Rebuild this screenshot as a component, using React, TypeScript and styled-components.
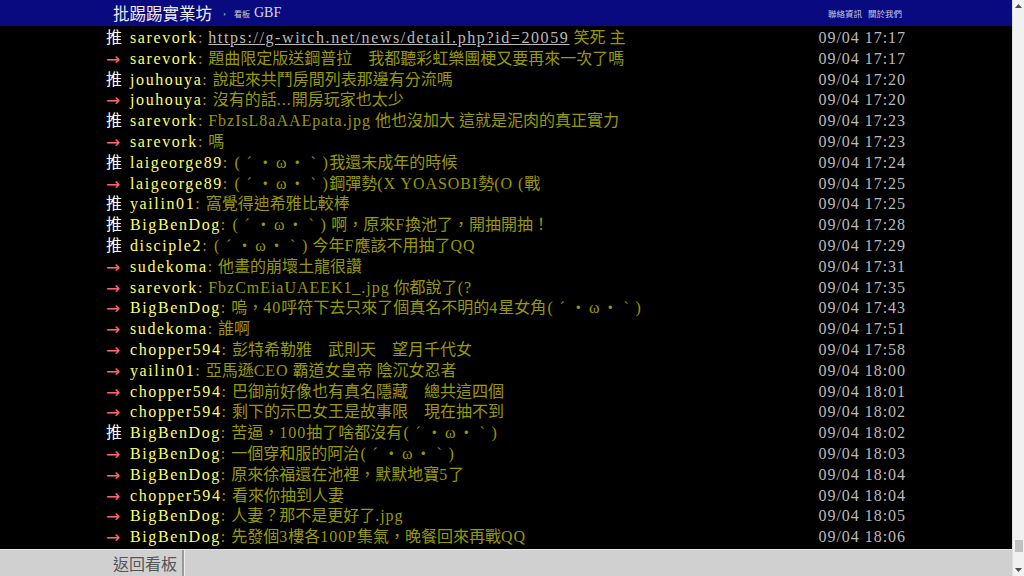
import React from 'react'
import styled, { createGlobalStyle } from 'styled-components'

const Global = createGlobalStyle`
html, body {
  margin: 0;
  padding: 0;
  height: 100%;
  overflow: hidden;
  background: #000;
}
body {
  font-family: "Liberation Serif", "Noto Sans CJK TC", serif;
}
`

type Push = { tag: '推' | '→'; user: string; content: string; link?: string; time: string }

const K = '(ˊ・ω・ˋ)'

const pushes: Push[] = [
  { tag: '推', user: 'sarevork', link: 'https://g-witch.net/news/detail.php?id=20059', content: ' 笑死 主', time: '09/04 17:17' },
  { tag: '→', user: 'sarevork', content: '題曲限定版送鋼普拉　我都聽彩虹樂團梗又要再來一次了嗎', time: '09/04 17:17' },
  { tag: '推', user: 'jouhouya', content: '說起來共鬥房間列表那邊有分流嗎', time: '09/04 17:20' },
  { tag: '→', user: 'jouhouya', content: '沒有的話...開房玩家也太少', time: '09/04 17:20' },
  { tag: '推', user: 'sarevork', content: 'FbzIsL8aAAEpata.jpg 他也沒加大 這就是泥肉的真正實力', time: '09/04 17:23' },
  { tag: '→', user: 'sarevork', content: '嗎', time: '09/04 17:23' },
  { tag: '推', user: 'laigeorge89', content: K + '我還未成年的時候', time: '09/04 17:24' },
  { tag: '→', user: 'laigeorge89', content: K + '鋼彈勢(X YOASOBI勢(O (戰', time: '09/04 17:25' },
  { tag: '推', user: 'yailin01', content: '窩覺得迪希雅比較棒', time: '09/04 17:25' },
  { tag: '推', user: 'BigBenDog', content: K + ' 啊，原來F換池了，開抽開抽！', time: '09/04 17:28' },
  { tag: '推', user: 'disciple2', content: K + ' 今年F應該不用抽了QQ', time: '09/04 17:29' },
  { tag: '→', user: 'sudekoma', content: '他畫的崩壞土龍很讚', time: '09/04 17:31' },
  { tag: '→', user: 'sarevork', content: 'FbzCmEiaUAEEK1_.jpg 你都說了(?', time: '09/04 17:35' },
  { tag: '→', user: 'BigBenDog', content: '嗚，40呼符下去只來了個真名不明的4星女角' + K, time: '09/04 17:43' },
  { tag: '→', user: 'sudekoma', content: '誰啊', time: '09/04 17:51' },
  { tag: '→', user: 'chopper594', content: '彭特希勒雅　武則天　望月千代女', time: '09/04 17:58' },
  { tag: '→', user: 'yailin01', content: '亞馬遜CEO 霸道女皇帝 陰沉女忍者', time: '09/04 18:00' },
  { tag: '→', user: 'chopper594', content: '巴御前好像也有真名隱藏　總共這四個', time: '09/04 18:01' },
  { tag: '→', user: 'chopper594', content: '剩下的示巴女王是故事限　現在抽不到', time: '09/04 18:02' },
  { tag: '推', user: 'BigBenDog', content: '苦逼，100抽了啥都沒有' + K, time: '09/04 18:02' },
  { tag: '→', user: 'BigBenDog', content: '一個穿和服的阿治' + K, time: '09/04 18:03' },
  { tag: '→', user: 'BigBenDog', content: '原來徐福還在池裡，默默地寶5了', time: '09/04 18:04' },
  { tag: '→', user: 'chopper594', content: '看來你抽到人妻', time: '09/04 18:04' },
  { tag: '→', user: 'BigBenDog', content: '人妻？那不是更好了.jpg', time: '09/04 18:05' },
  { tag: '→', user: 'BigBenDog', content: '先發個3樓各100P集氣，晚餐回來再戰QQ', time: '09/04 18:06' },
]

//Components
const Shell = styled.div`
display: flex;
height: 100vh;
width: 100vw;
overflow: hidden;
`
const Page = styled.div`
flex: 1;
display: flex;
flex-direction: column;
min-width: 0;
background: #000;
`
const Topbar = styled.div`
height: 26px;
flex-shrink: 0;
background-color: #0a0a80;
`
const Inner = styled.div`
width: 800px;
margin: 0 auto;
height: 100%;
display: flex;
align-items: center;
`
const Logo = styled.span`
font-size: 16.5px;
color: #ececec;
padding-left: 7px;
`
const Crumb = styled.span`
font-size: 9px;
color: #ccc;
margin-left: 11px;
`
const BoardLabel = styled.span`
font-size: 8px;
color: #ccc;
margin-left: 8px;
`
const BoardName = styled.span`
font-size: 14px;
color: #ddd;
margin-left: 4px;
`
const TopLinks = styled.div`
margin-left: auto;
display: flex;
gap: 6px;
padding-right: 4px;
font-size: 8.5px;
color: #c8c8e0;
`
const Content = styled.div`
flex: 1;
overflow: hidden;
padding-top: 2px;
`
const List = styled.div`
width: 800px;
margin: 0 auto;
`
const Row = styled.div`
display: flex;
font-size: 16px;
line-height: 20.8px;
height: 20.8px;
white-space: pre;
`
const Tag = styled.span<{ $push: boolean }>`
color: ${p => (p.$push ? '#fff' : '#f66')};
font-family: ${p => (p.$push ? '"Liberation Serif", "Noto Sans CJK TC", serif' : '"DejaVu Sans", sans-serif')};
font-size: ${p => (p.$push ? '16px' : '17px')};
width: 24px;
flex-shrink: 0;
`
const User = styled.span`
color: #ff6;
letter-spacing: 0.1em;
`
const Text = styled.span`
color: #990;
flex: 1;
overflow: hidden;
`
const Latin = styled.span`
letter-spacing: 0.06em;
`
const LinkSC = styled.span`
color: #bbb;
text-decoration: underline;
letter-spacing: 0.1em;
`
const Paren = styled.span`
display: inline-block;
width: 0.5em;
text-align: center;
`
const Cell = styled.span`
display: inline-block;
width: 1em;
text-align: center;
`
const Time = styled.span`
color: #bbb;
letter-spacing: 0.06em;
margin-left: auto;
`
const Bottom = styled.div`
height: 27px;
flex-shrink: 0;
background: #d0d0d0;
border-top: 1px solid #e4e4e4;
box-sizing: border-box;
`
const BackButton = styled.div`
width: 78px;
height: 100%;
box-sizing: border-box;
padding-left: 7px;
display: flex;
align-items: center;
font-size: 16px;
color: #555;
border-right: 2px solid #9a9a9a;
box-shadow: 1px 0 0 #eee;
`
const Scrollbar = styled.div`
width: 12px;
box-sizing: border-box;
flex-shrink: 0;
background: #f1f1f1;
border-left: 1px solid #e0e0e0;
display: flex;
flex-direction: column;
align-items: center;
`
const Arrow = styled.div`
height: 12px;
display: flex;
align-items: center;
justify-content: center;
`
const Track = styled.div`
flex: 1;
width: 100%;
display: flex;
flex-direction: column;
justify-content: flex-end;
align-items: center;
padding-bottom: 12px;
`
const Thumb = styled.div`
width: 8px;
height: 12px;
background: #c1c1c1;
`

function Triangle({ down }: { down?: boolean }) {
  return (
    <svg width="7" height="4" viewBox="0 0 7 4">
      <polygon points={down ? '0,0 7,0 3.5,4' : '0,4 7,4 3.5,0'} fill="#505050" />
    </svg>
  )
}

// the kaomoji is drawn on the terminal grid: full-width cells between half-width parens
function Kaomoji() {
  return (
    <>
      <Paren>(</Paren>
      {['ˊ', '・', 'ω', '・', 'ˋ'].map((c, i) => <Cell key={i}>{c}</Cell>)}
      <Paren>)</Paren>
    </>
  )
}

// half-width runs get a bit of spacing so they sit closer to the terminal grid
function Mixed({ text }: { text: string }) {
  const chunks = text.split(K)
  return (
    <>
      {chunks.map((chunk, j) => {
        const parts = chunk.split(/([\x21-\x7e][\x20-\x7e]*[\x21-\x7e]|[\x21-\x7e])/)
        return (
          <React.Fragment key={j}>
            {j > 0 && <Kaomoji />}
            {parts.map((s, i) => (i % 2 ? <Latin key={i}>{s}</Latin> : s))}
          </React.Fragment>
        )
      })}
    </>
  )
}

export default function App() {
  return (
    <Shell>
      <Global />
      <Page>
        <Topbar>
          <Inner>
            <Logo>批踢踢實業坊</Logo>
            <Crumb>›</Crumb>
            <BoardLabel>看板</BoardLabel>
            <BoardName>GBF</BoardName>
            <TopLinks>
              <span>聯絡資訊</span>
              <span>關於我們</span>
            </TopLinks>
          </Inner>
        </Topbar>
        <Content>
          <List>
            {pushes.map((p, i) => (
              <Row key={i}>
                <Tag $push={p.tag === '推'}>{p.tag}</Tag>
                <User>{p.user}</User>
                <Text>
                  <Latin>: </Latin>
                  {p.link && <LinkSC>{p.link}</LinkSC>}
                  <Mixed text={p.content} />
                </Text>
                <Time>{p.time}</Time>
              </Row>
            ))}
          </List>
        </Content>
        <Bottom>
          <Inner>
            <BackButton>返回看板</BackButton>
          </Inner>
        </Bottom>
      </Page>
      <Scrollbar>
        <Arrow><Triangle /></Arrow>
        <Track><Thumb /></Track>
        <Arrow><Triangle down /></Arrow>
      </Scrollbar>
    </Shell>
  )
}
